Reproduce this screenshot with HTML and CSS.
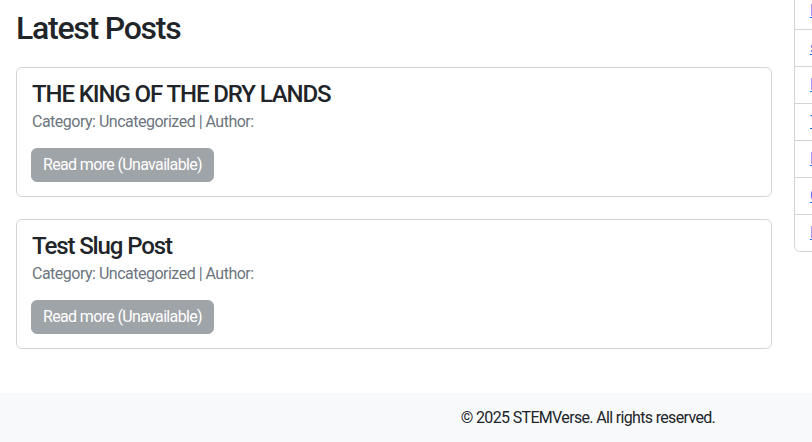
FILE: index.html
```html
<!DOCTYPE html>
<html lang="en">
<head>
<meta charset="utf-8">
<title>Latest Posts</title>
<link rel="stylesheet" href="styles.css">
</head>
<body>
<div class="site">
  <div class="layout">
    <main class="main">
      <h2 class="page-title">Latest Posts</h2>
      <article class="card">
        <h4 class="card-title">THE KING OF THE DRY LANDS</h4>
        <p class="meta">Category: Uncategorized | Author:</p>
        <span class="btn">Read more (Unavailable)</span>
      </article>
      <article class="card">
        <h4 class="card-title">Test Slug Post</h4>
        <p class="meta">Category: Uncategorized | Author:</p>
        <span class="btn">Read more (Unavailable)</span>
      </article>
    </main>
    <aside class="sidebar">
      <ul class="list">
        <li class="item"><a href="#">Biology</a></li>
        <li class="item"><a href="#">space</a></li>
        <li class="item"><a href="#">Physics</a></li>
        <li class="item"><a href="#">Technology</a></li>
        <li class="item"><a href="#">Engineering</a></li>
        <li class="item"><a href="#">Chemistry</a></li>
        <li class="item"><a href="#">Mathematics</a></li>
      </ul>
    </aside>
  </div>
  <footer class="footer">
    <p class="footer-text">© 2025 STEMVerse. All rights reserved.</p>
  </footer>
</div>
</body>
</html>
```
FILE: styles.css
```css
html, body {
  margin: 0;
  padding: 0;
  overflow: hidden;
  background: #fff;
}
body {
  font-family: Roboto, Lato, sans-serif;
  color: #212529;
  font-size: 16px;
  line-height: 1.5;
}
.site {
  width: 1176px;
}
.layout {
  display: flex;
  gap: 22px;
  padding-left: 16px;
  align-items: flex-start;
}
.main {
  width: 756px;
  flex: none;
}
.page-title {
  font-size: 32px;
  font-weight: 500;
  line-height: 38.4px;
  letter-spacing: -1.25px;
  margin: 9px 0 19.6px;
}
.card {
  border: 1px solid #d3d4d5;
  border-radius: 6px;
  padding: 12px 14px 14px;
  margin-bottom: 22px;
  display: flex;
  flex-direction: column;
  align-items: flex-start;
}
.card-title {
  font-size: 24px;
  font-weight: 500;
  line-height: 28px;
  letter-spacing: -1.1px;
  margin: 0;
  padding-left: 1px;
}
.meta {
  color: #6c757d;
  letter-spacing: -0.5px;
  margin: 2px 0 14px;
  padding-left: 1px;
}
.btn {
  display: inline-block;
  background: #9fa4a8;
  border: 1px solid #9fa4a8;
  color: #fff;
  border-radius: 6px;
  padding: 4px 11px;
  line-height: 24px;
  letter-spacing: -0.65px;
}
.sidebar {
  width: 300px;
  flex: none;
}
.list {
  list-style: none;
  margin: -8px 0 0;
  padding: 0;
  border: 1px solid #d3d4d5;
  border-radius: 6px;
}
.item {
  padding: 8px 15px;
  line-height: 20px;
  border-top: 1px solid #d3d4d5;
}
.item:first-child {
  border-top: none;
}
.item a {
  color: #0d6efd;
  text-decoration: underline;
}
.footer {
  background: #f8f9fa;
  margin-top: 22px;
  padding: 13px 0 15px;
  text-align: center;
}
.footer-text {
  margin: 0;
  letter-spacing: -0.66px;
}
```
